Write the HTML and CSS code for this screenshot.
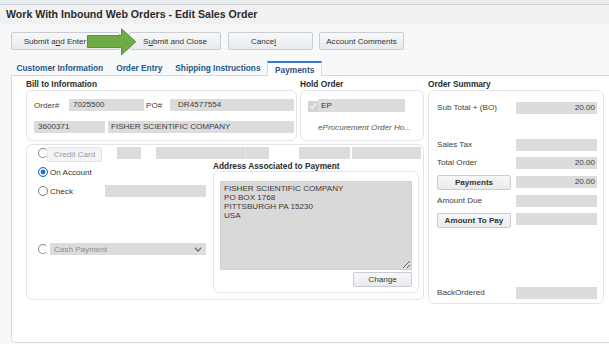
FILE: index.html
```html
<!DOCTYPE html>
<html lang="en">
<head>
    <meta charset="UTF-8">
    <meta name="viewport" content="width=device-width, initial-scale=1.0">
    <title>Work With Inbound Web Orders - Edit Sales Order</title>
    <link rel="stylesheet" href="styles.css">
</head>
<body>

<div class="topline"></div>
<div class="titlebar">Work With Inbound Web Orders - Edit Sales Order</div>

<div class="toolbar">
    <button class="btn btn-enter">Submit a<u>n</u>d Enter</button>
    <button class="btn btn-close">S<u>u</u>bmit and Close</button>
    <button class="btn btn-cancel">Cance<u>l</u></button>
    <button class="btn btn-comments">Account Comments</button>
    <svg class="arrow" width="50" height="28" viewBox="0 0 50 28">
        <polygon points="0.5,7.5 34.5,7.5 34.5,0.8 48.8,13.8 34.5,26.8 34.5,19.5 0.5,19.5" fill="#6fac46" stroke="#5a9236" stroke-width="1"/>
    </svg>
</div>

<div class="tabs">
    <div class="tab">Customer Information</div>
    <div class="tab">Order Entry</div>
    <div class="tab">Shipping Instructions</div>
    <div class="tab active">Payments</div>
</div>

<div class="panel">
    <div class="cols">
        <div class="leftcol">
            <div class="toprow">
                <div class="group bill">
                    <div class="group-label">Bill to Information</div>
                    <div class="box bill-box">
                        <div class="row">
                            <span class="lbl lbl-order">Order#</span>
                            <span class="field f-order">7025500</span>
                            <span class="lbl lbl-po">PO#</span>
                            <span class="field f-po">DR4577554</span>
                        </div>
                        <div class="row row-2">
                            <span class="field f-cust">3600371</span>
                            <span class="field f-name">FISHER SCIENTIFIC COMPANY</span>
                        </div>
                    </div>
                </div>
                <div class="group hold">
                    <div class="group-label">Hold Order</div>
                    <div class="box hold-box">
                        <div class="row">
                            <span class="check">
                                <svg width="8" height="8" viewBox="0 0 8 8"><polyline points="1,4.2 3.2,6.4 7,1.6" fill="none" stroke="#f2f2f2" stroke-width="1.5"/></svg>
                            </span>
                            <span class="field f-ep">EP</span>
                        </div>
                        <div class="hold-note">eProcurement Order Ho...</div>
                    </div>
                </div>
            </div>

            <div class="box paybox">
                <div class="pay-top">
                    <span class="radio cut"></span>
                    <button class="btn-cc">Credit Card</button>
                    <span class="field pf1"></span>
                    <span class="field pf2"></span>
                    <span class="field pf3"></span>
                    <span class="field pf4"></span>
                    <span class="field pf5"></span>
                </div>
                <div class="pay-body">
                    <div class="methods">
                        <div class="method m-account">
                            <span class="radio on"></span>
                            <span class="method-text">On Account</span>
                        </div>
                        <div class="method m-check">
                            <span class="radio"></span>
                            <span class="method-text">Check</span>
                            <span class="field f-check"></span>
                        </div>
                        <div class="method m-cash">
                            <span class="radio cut"></span>
                            <div class="select">
                                <span>Cash Payment</span>
                                <svg width="8" height="5" viewBox="0 0 8 5"><polyline points="0.8,0.8 4,4 7.2,0.8" fill="none" stroke="#707070" stroke-width="1.3"/></svg>
                            </div>
                        </div>
                    </div>
                    <div class="address">
                        <div class="group-label addr-label">Address Associated to Payment</div>
                        <div class="box addr-box">
                            <textarea class="addr-text" readonly>FISHER SCIENTIFIC COMPANY
PO BOX 1768
PITTSBURGH PA 15230
USA</textarea>
                            <div class="addr-actions">
                                <button class="btn btn-change">Change</button>
                            </div>
                        </div>
                    </div>
                </div>
            </div>
        </div>

        <div class="group summary">
            <div class="group-label">Order Summary</div>
            <div class="box sum-box">
                <div class="sum-row s-sub">
                    <span class="sum-lbl">Sub Total + (BO)</span>
                    <span class="field num">20.00</span>
                </div>
                <div class="sum-row s-tax">
                    <span class="sum-lbl">Sales Tax</span>
                    <span class="field num"></span>
                </div>
                <div class="sum-row s-total">
                    <span class="sum-lbl">Total Order</span>
                    <span class="field num">20.00</span>
                </div>
                <div class="sum-row s-pay">
                    <button class="btn btn-sum">Payments</button>
                    <span class="field num">20.00</span>
                </div>
                <div class="sum-row s-due">
                    <span class="sum-lbl">Amount Due</span>
                    <span class="field num"></span>
                </div>
                <div class="sum-row s-topay">
                    <button class="btn btn-sum">Amount To Pay</button>
                    <span class="field num"></span>
                </div>
                <div class="sum-row s-bo">
                    <span class="sum-lbl">BackOrdered</span>
                    <span class="field num"></span>
                </div>
            </div>
        </div>
    </div>
</div>

</body>
</html>
```

FILE: styles.css
```css
body {
    margin: 0;
    width: 609px;
    height: 344px;
    overflow: hidden;
    background-color: #f7f8fa;
    font-family: "Liberation Sans", Arial, sans-serif;
    font-size: 8.1px;
    color: #333;
}
button {
    font-family: inherit;
}
.topline {
    height: 4px;
    background-color: #eaedf0;
    border-bottom: 1px solid #cdd2d8;
}
.titlebar {
    height: 19px;
    line-height: 19px;
    padding-left: 6px;
    background-color: #f1f1f1;
    font-size: 10.6px;
    font-weight: bold;
    color: #2b2b2b;
}

/* toolbar */
.toolbar {
    position: relative;
    height: 34px;
    display: flex;
    align-items: flex-start;
    padding-top: 8px;
    box-sizing: border-box;
}
.btn {
    height: 18px;
    padding: 0;
    font-size: 8.1px;
    color: #333;
    background: linear-gradient(#f7f8f9, #e9eaec);
    border: 1px solid #c9cdd2;
    border-radius: 2px;
}
.btn-enter {
    width: 109px;
    margin-left: 11px;
    padding-right: 21px;
}
.btn-close {
    width: 92px;
    margin-left: 9px;
}
.btn-cancel {
    width: 85px;
    margin-left: 7px;
    padding-right: 14px;
}
.btn-comments {
    width: 85px;
    margin-left: 6px;
}
.arrow {
    position: absolute;
    left: 87px;
    top: 4px;
}

/* tabs */
.tabs {
    height: 17px;
    display: flex;
    align-items: flex-end;
    padding-left: 10px;
}
.tab {
    height: 14px;
    line-height: 14px;
    padding: 0 6.5px;
    font-size: 8.3px;
    font-weight: bold;
    color: #255685;
}
.tab.active {
    position: relative;
    margin-bottom: -1px;
    height: 13px;
    line-height: 14px;
    padding: 0 7px;
    background-color: #fff;
    border: 1px solid #d5dae0;
    border-top: 2px solid #3a7ad0;
    border-bottom: none;
    color: #28527e;
}

/* panel */
.panel {
    width: 598px;
    height: 268px;
    margin-left: 11px;
    box-sizing: border-box;
    background-color: #fff;
    border: 1px solid #d5dae0;
    border-right: none;
    border-bottom-left-radius: 5px;
    padding: 2px 0 0 14px;
}
.cols {
    display: flex;
    gap: 4px;
}
.leftcol {
    width: 398px;
}
.toprow {
    display: flex;
    gap: 3px;
}
.group-label {
    height: 12px;
    line-height: 12px;
    font-size: 8.3px;
    font-weight: bold;
    color: #2b2b2b;
}
.box {
    box-sizing: border-box;
    border: 1px solid #e1e4e8;
    border-radius: 6px;
    background-color: #fff;
}
.row {
    display: flex;
    align-items: center;
}
.field {
    display: inline-block;
    height: 12px;
    line-height: 12px;
    box-sizing: border-box;
    padding-left: 4px;
    background-color: #dcdcdc;
    color: #404040;
    white-space: nowrap;
}
.lbl {
    color: #404040;
}

/* bill to */
.bill {
    width: 271px;
}
.bill-box {
    height: 51px;
    padding: 8px 2px 0 6px;
}
.lbl-order {
    width: 35px;
    padding-left: 1px;
}
.f-order {
    width: 75px;
}
.lbl-po {
    width: 24px;
    margin-left: 2px;
}
.f-po {
    width: 124px;
    padding-left: 8px;
}
.row-2 {
    margin-top: 10px;
}
.f-cust {
    width: 71px;
    margin-left: 1px;
}
.f-name {
    width: 186px;
    margin-left: 3px;
    padding-left: 3px;
}

/* hold order */
.hold {
    width: 124px;
}
.hold-box {
    height: 51px;
    padding: 8px 0 0 7px;
}
.check {
    width: 10px;
    height: 11px;
    display: flex;
    align-items: center;
    justify-content: center;
    background-color: #d3d3d3;
    margin-top: 1px;
}
.f-ep {
    width: 87px;
    height: 13px;
    line-height: 13px;
    padding-left: 3px;
    color: #333;
}
.hold-note {
    margin: 11px 0 0 10px;
    line-height: 10px;
    font-style: italic;
    color: #555;
    white-space: nowrap;
}

/* payment */
.paybox {
    margin-top: 3px;
    height: 156px;
    padding-top: 2px;
}
.pay-top {
    display: flex;
    align-items: flex-start;
    height: 15px;
}
.radio {
    display: inline-block;
    width: 10px;
    height: 10px;
    box-sizing: border-box;
    border: 1px solid #7a7a7a;
    border-radius: 50%;
    background-color: #fff;
    flex: none;
}
.radio.cut {
    border-color: #8a8a8a transparent #8a8a8a #8a8a8a;
}
.pay-top .radio {
    margin: 1px 0 0 11px;
}
.radio.on {
    border-color: #1b6fd8;
    background-color: #1b6fd8;
    box-shadow: inset 0 0 0 1.6px #fff;
}
.btn-cc {
    width: 55px;
    height: 15px;
    margin-left: -1px;
    padding: 0;
    font-size: 8.1px;
    color: #9b9b9b;
    background-color: #f3f4f5;
    border: 1px solid #e2e4e7;
    border-radius: 2px;
}
.pf1 {
    width: 24px;
    margin-left: 15px;
}
.pf2 {
    width: 89px;
    margin-left: 15px;
}
.pf3 {
    width: 24px;
    border-left: 1px solid #e6e6e6;
}
.pf4 {
    width: 51px;
    margin-left: 30px;
}
.pf5 {
    width: 69px;
    margin-left: 2px;
}
.pay-body {
    display: flex;
}
.methods {
    width: 186px;
    box-sizing: border-box;
    padding: 4px 7px 0 11px;
}
.method {
    display: flex;
    align-items: center;
    height: 12px;
}
.method-text {
    margin-left: 2px;
    color: #333;
}
.m-check {
    margin-top: 7px;
}
.f-check {
    width: 101px;
    margin-left: auto;
}
.m-cash {
    margin-top: 46px;
}
.select {
    width: 156px;
    height: 12px;
    margin-left: auto;
    box-sizing: border-box;
    padding: 0 4px 0 4px;
    display: flex;
    align-items: center;
    justify-content: space-between;
    background-color: #dcdcdc;
    color: #8c8c8c;
}
.address {
    width: 206px;
}
.addr-label {
    height: 9px;
    line-height: 9px;
}
.addr-box {
    height: 122px;
    padding: 9px 6px 0 6px;
}
.addr-text {
    display: block;
    width: 192px;
    height: 89px;
    box-sizing: border-box;
    margin: 0;
    padding: 2px 3px;
    border: 1px solid #d2d2d2;
    border-radius: 0;
    background-color: #d9d9d9;
    font-family: inherit;
    font-size: 8.1px;
    line-height: 9px;
    color: #3a3a3a;
    overflow: hidden;
}
.addr-actions {
    display: flex;
    justify-content: flex-end;
    margin-top: 2px;
}
.btn-change {
    width: 59px;
    height: 15px;
    font-size: 8.1px;
}

/* order summary */
.summary {
    width: 176px;
}
.sum-box {
    padding: 0 5px 4px 8px;
}
.sum-row {
    display: flex;
    align-items: flex-start;
}
.sum-lbl {
    width: 79px;
    height: 12px;
    line-height: 12px;
    color: #404040;
}
.num {
    width: 81px;
    text-align: right;
    padding-right: 2px;
}
.s-sub {
    margin-top: 11px;
}
.s-tax {
    margin-top: 25px;
}
.s-total {
    margin-top: 6px;
}
.s-pay {
    margin-top: 6px;
}
.s-pay .num {
    margin-top: 1px;
}
.s-due {
    margin-top: 5px;
}
.s-topay {
    margin-top: 6px;
}
.s-bo {
    margin-top: 59px;
}
.btn-sum {
    width: 74px;
    height: 15px;
    margin-right: 5px;
    font-weight: bold;
    color: #333;
}
```
